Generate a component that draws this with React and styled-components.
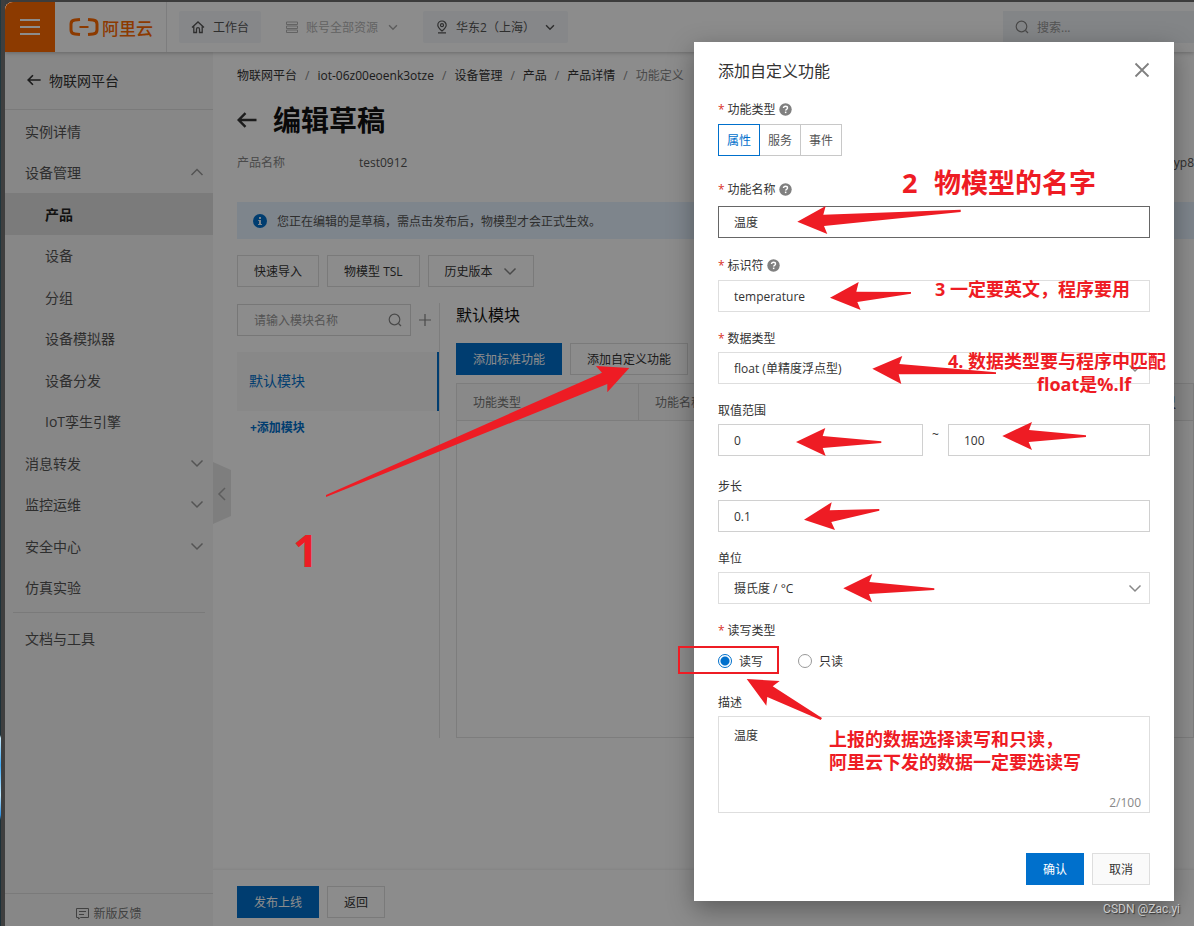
import React from "react";
import styled, { createGlobalStyle, css } from "styled-components";

const FONT = '"Open Sans", "Noto Sans CJK SC", sans-serif';
const BLUE = "#0070cc";
const RED = "#ee1c24";

const GlobalStyle = createGlobalStyle`
  *, *::before, *::after { box-sizing: border-box; }
  body { margin: 0; background: #3c3c3c; font-family: ${FONT}; font-size: 12px; color: #333; }
  button, input, select, textarea { font-family: inherit; font-size: inherit; color: inherit; }
  button { cursor: pointer; }
  h1, h2, p, ul { margin: 0; padding: 0; }
  ul { list-style: none; }
  a { color: inherit; text-decoration: none; }
`;

/* ---------- window ---------- */
const Window = styled.div`
  position: relative;
  display: flex;
  min-height: 100vh;
  padding-top: 2px;
  overflow: hidden;
`;

const DesktopEdge = styled.div`
  flex: 0 0 5px;
  margin-top: -2px;
  border-right: 4px solid #3f3f3f;
  background: linear-gradient(
    #22383f 0, #1c3038 735px, #c8e8f8 738px, #3fa9f5 765px, #bfe6fb 795px, #2f8fe0 815px, #1c3038 820px
  );
`;

const Console = styled.div`
  position: relative;
  flex: 1;
  min-width: 0;
  display: flex;
  flex-direction: column;
  background: #fff;
  border-top-left-radius: 8px;
  overflow: hidden;
`;

const Backdrop = styled.div`
  position: absolute;
  inset: 0;
  background: rgba(0, 0, 0, 0.45);
  z-index: 3;
`;

/* ---------- header ---------- */
const Header = styled.header`
  position: relative;
  z-index: 2;
  display: flex;
  align-items: center;
  height: 50px;
  background: #fff;
  box-shadow: 0 1px 4px rgba(0, 0, 0, 0.25);
`;

const MenuButton = styled.button`
  display: flex;
  align-items: center;
  justify-content: center;
  width: 50px;
  height: 50px;
  border: 0;
  padding: 0;
  background: #ff6a00;
`;

const Brand = styled.a`
  display: flex;
  align-items: center;
  gap: 3px;
  width: 112px;
  height: 50px;
  padding-left: 14px;
  border-right: 1px solid #e3e4e6;
  color: #ff6a00;
  font-size: 17px;
  font-weight: 500;
  white-space: nowrap;
`;

const HeaderButton = styled.button`
  display: flex;
  align-items: center;
  gap: 8px;
  height: 32px;
  margin-left: 12px;
  padding: 0 ${(p) => (p.$menu ? 13 : 12)}px;
  border: 0;
  border-radius: 2px;
  background: ${(p) => (p.disabled ? "transparent" : "#f4f6fa")};
  color: ${(p) => (p.disabled ? "#b5b5b5" : "#555")};
  white-space: nowrap;
  svg + svg, span + svg { margin-left: 2px; }
`;

const HeaderSearch = styled.label`
  display: flex;
  align-items: center;
  gap: 8px;
  width: 191px;
  height: 32px;
  margin-left: auto;
  padding-left: 12px;
  background: #eff2f6;
  color: #888;
  input {
    flex: 1;
    min-width: 0;
    border: 0;
    padding: 0;
    background: transparent;
    outline: 0;
  }
  input::placeholder { color: #999; }
`;

/* ---------- sidebar ---------- */
const Body = styled.div`
  flex: 1;
  display: flex;
  min-height: 0;
`;

const Sidebar = styled.aside`
  position: relative;
  display: flex;
  flex-direction: column;
  flex: 0 0 208px;
  background: #f6f6f6;
  font-size: 14px;
`;

const SideTitle = styled.a`
  display: flex;
  align-items: center;
  gap: 8px;
  height: 58px;
  padding: 0 0 2px 22px;
  border-bottom: 1px solid #dedede;
  color: #333;
`;

const Menu = styled.ul`
  display: flex;
  flex-direction: column;
  height: 498px;
`;

const MenuItem = styled.li`
  flex: 1;
  display: flex;
  align-items: center;
  padding: 0 9px 0 ${(p) => (p.$nested ? 40 : 20)}px;
  background: ${(p) => (p.$active ? "#e1e1e1" : "transparent")};
  color: ${(p) => (p.$active ? "#222" : "#555")};
  font-weight: ${(p) => (p.$active ? 700 : 400)};
  a { flex: 1; }
`;

const SideDivider = styled.hr`
  width: 192px;
  margin: 4px auto 5px;
  border: 0;
  border-top: 1px solid #dedede;
`;

const DocLink = styled.a`
  padding-left: 20px;
  line-height: 41px;
  color: #555;
`;

const Feedback = styled.a`
  display: flex;
  justify-content: center;
  gap: 4px;
  height: 33px;
  margin-top: auto;
  padding-top: 10px;
  border-top: 1px solid #dedede;
  font-size: 12px;
  line-height: 20px;
  color: #777;
  svg { margin-top: 3px; }
`;

const CollapseButton = styled.button`
  position: absolute;
  left: 208px;
  top: 410px;
  width: 18px;
  height: 62px;
  padding: 0;
  border: 0;
  background: none;
  svg { display: block; }
`;

/* ---------- main ---------- */
const Main = styled.main`
  flex: 1;
  min-width: 0;
  display: flex;
  flex-direction: column;
`;

const Content = styled.div`
  flex: 1;
  padding: 14px 0 0 24px;
`;

const Breadcrumb = styled.nav`
  display: flex;
  gap: 8px;
  line-height: 20px;
  white-space: nowrap;
  span { color: #888; }
`;

const PageTitle = styled.div`
  display: flex;
  align-items: center;
  gap: 16px;
  height: 40px;
  margin-top: 14px;
  h1 { font-size: 28px; font-weight: 700; line-height: 40px; color: #111; }
`;

const InfoRow = styled.dl`
  display: flex;
  margin: 13px 0 0;
  line-height: 20px;
  dt { width: 122px; color: #888; }
  dd { margin: 0; color: #555; }
  dd:last-child { margin-left: auto; width: 27px; overflow: hidden; }
`;

const Notice = styled.p`
  display: flex;
  align-items: center;
  gap: 10px;
  height: 37px;
  margin-top: 29px;
  padding-left: 16px;
  background: #e5f2ff;
  color: #555;
`;

const ButtonRow = styled.div`
  display: flex;
  gap: 8px;
  margin-top: ${(p) => p.$top || 0}px;
  justify-content: ${(p) => (p.$end ? "flex-end" : "flex-start")};
`;

const Button = styled.button`
  display: flex;
  align-items: center;
  gap: 10px;
  height: 32px;
  padding: 0 16px;
  border: 1px solid ${(p) => (p.$primary ? BLUE : "#dedede")};
  background: ${(p) => (p.$primary ? BLUE : p.$soft ? "#fafafa" : "#fff")};
  color: ${(p) => (p.$primary ? "#fff" : "#333")};
  white-space: nowrap;
`;

const Panels = styled.div`
  display: flex;
  height: 435px;
  margin-top: 16px;
`;

const ModuleColumn = styled.div`
  flex: 0 0 203px;
  padding-top: 1px;
  border-right: 1px solid #e3e3e3;
`;

const ModuleSearch = styled.div`
  display: flex;
  align-items: center;
  gap: 8px;
  label {
    display: flex;
    align-items: center;
    width: 174px;
    height: 32px;
    padding: 0 8px 0 16px;
    border: 1px solid #d9d9d9;
    color: #888;
  }
  input {
    flex: 1;
    min-width: 0;
    padding: 0;
    border: 0;
    background: transparent;
    outline: 0;
  }
  input::placeholder { color: #999; }
  button { display: flex; padding: 0; border: 0; background: none; }
`;

const ModuleItem = styled.a`
  display: block;
  height: 59px;
  margin-top: 16px;
  padding-left: 12px;
  border-right: 2px solid ${BLUE};
  background: #f7f7f7;
  font-size: 14px;
  line-height: 58px;
  color: ${BLUE};
`;

const AddModule = styled.a`
  display: block;
  margin-top: 7px;
  padding-left: 13px;
  line-height: 20px;
  font-weight: 700;
  color: ${BLUE};
`;

const FeatureColumn = styled.section`
  flex: 1;
  min-width: 0;
  padding-left: 16px;
  h2 { font-size: 16px; font-weight: 400; line-height: 24px; color: #111; }
`;

const FeatureTable = styled.table`
  width: 100%;
  height: 355px;
  margin-top: 8px;
  table-layout: fixed;
  border-collapse: collapse;
  border: 1px solid #e3e3e3;
  th {
    height: 37px;
    padding: 0 0 0 16px;
    border-bottom: 1px solid #e3e3e3;
    background: #fafafa;
    font-weight: 400;
    text-align: left;
    white-space: nowrap;
    color: #777;
  }
  th:first-child { border-right: 1px solid #e3e3e3; }
  th a { color: #4a5a8a; text-decoration: underline; }
`;

const ActionBar = styled.footer`
  padding: 16px 24px 8px;
  border-top: 1px solid #f5f5f5;
  box-shadow: 0 -1px 2px rgba(0, 0, 0, 0.03);
`;

/* ---------- dialog ---------- */
const Dialog = styled.section`
  position: absolute;
  z-index: 4;
  top: 42px;
  right: 20px;
  width: 480px;
  padding: 16px 24px 16px;
  background: #fff;
  box-shadow: 0 8px 24px rgba(0, 0, 0, 0.35);
`;

const DialogHead = styled.header`
  display: flex;
  align-items: center;
  justify-content: space-between;
  height: 24px;
  margin-bottom: 12px;
  h2 { font-size: 16px; font-weight: 400; color: #333; }
  button { display: flex; padding: 0; border: 0; background: none; }
`;

const Field = styled.div`
  margin-bottom: ${(p) => p.$gap || 12}px;
`;

const Label = styled.label`
  display: flex;
  align-items: center;
  gap: 3px;
  height: ${(p) => p.$height || 28}px;
  color: #333;
  i { color: #d93026; font-style: normal; }
`;

const control = css`
  display: block;
  width: 100%;
  height: 32px;
  padding: 0 15px;
  border: 1px solid #dedede;
  border-radius: 0;
  background: #fff;
  color: #333;
  outline: 0;
`;

const TextInput = styled.input`
  ${control}
  border-color: ${(p) => (p.$focused ? "#666" : p.$strong ? "#d0d0d0" : "#dedede")};
`;

const SelectBox = styled.div`
  position: relative;
  select { ${control} appearance: none; }
  svg { position: absolute; right: 8px; top: 9px; pointer-events: none; }
`;

const Segments = styled.div`
  display: flex;
`;

const Segment = styled.button`
  position: relative;
  z-index: ${(p) => (p.$active ? 1 : 0)};
  width: 42px;
  height: 32px;
  padding: 0;
  border: 1px solid ${(p) => (p.$active ? BLUE : "#c8c8c8")};
  background: #fff;
  color: ${(p) => (p.$active ? BLUE : "#555")};
  & + & { margin-left: -1px; }
`;

const RangeRow = styled.div`
  display: flex;
  span { flex: 0 0 25px; text-align: center; line-height: 22px; }
  input:first-child { flex: 1; min-width: 0; }
  input:last-child { flex: 0 0 202px; width: 202px; }
`;

const RadioRow = styled.div`
  display: flex;
  gap: 35px;
  height: 33px;
  label { display: flex; align-items: center; gap: 7px; }
  input {
    appearance: none;
    width: 14px;
    height: 14px;
    margin: 0;
    border: 1px solid #999;
    border-radius: 50%;
    background: #fff;
  }
  input:checked {
    border-color: ${BLUE};
    background: radial-gradient(circle, ${BLUE} 0 4px, #fff 5px);
  }
`;

const TextAreaBox = styled.div`
  display: flex;
  flex-direction: column;
  height: 97px;
  border: 1px solid #dedede;
  textarea {
    flex: 1;
    padding: 9px 15px 0;
    border: 0;
    background: transparent;
    resize: none;
    outline: 0;
    line-height: 20px;
    color: #333;
  }
  span { padding-right: 8px; line-height: 18px; text-align: right; color: #888; }
`;

/* ---------- annotations ---------- */
const Arrows = styled.svg`
  position: absolute;
  left: 0;
  top: 0;
  z-index: 5;
  overflow: visible;
  pointer-events: none;
  fill: ${RED};
`;

const Note = styled.p`
  position: absolute;
  z-index: 5;
  left: ${(p) => p.$x}px;
  top: ${(p) => p.$y}px;
  color: ${RED};
  font-size: ${(p) => p.$size || 18}px;
  font-weight: 700;
  line-height: ${(p) => p.$line || 23}px;
  white-space: pre;
  pointer-events: none;
`;

const Frame = styled.div`
  position: absolute;
  left: -16px;
  top: 604px;
  width: 101px;
  height: 28px;
  border: 2px solid ${RED};
  pointer-events: none;
`;

const Watermark = styled.p`
  position: absolute;
  z-index: 5;
  right: 14px;
  bottom: 8px;
  font-family: Roboto, sans-serif;
  font-size: 12px;
  line-height: 18px;
  color: #ccc;
  text-shadow: 1px 1px 1px #333;
`;

/* ---------- icons ---------- */
const Line = ({ w = 14, h = w, box = `0 0 ${w} ${h}`, color = "currentColor", sw = 1, children }) => (
  <svg width={w} height={h} viewBox={box} fill="none" stroke={color} strokeWidth={sw} aria-hidden="true">
    {children}
  </svg>
);
const Chevron = ({ up, size = 14, color = "#888", sw = 1.5 }) => (
  <Line w={size} box="0 0 14 14" color={color} sw={sw}>
    <path d={up ? "M1.5 10 7 4.5l5.500 5.500" : "M1.500 4.500 7 10l5.500-5.500"} />
  </Line>
);
const BackArrow = ({ w, h }) => (
  <Line w={w} h={h} box="0 0 20 16" color="#333" sw={2.4}>
    <path d="M19.500 8H2M8.500 1.200 1.700 8l6.800 6.800" />
  </Line>
);
const SearchIcon = () => (
  <Line w={14} color="#888" sw={1.2}>
    <circle cx="6.500" cy="6.500" r="5.300" />
    <path d="m10.500 10.500 2.500 2.500" />
  </Line>
);
const Help = () => (
  <svg width="13" height="13" viewBox="0 0 13 13" aria-hidden="true">
    <circle cx="6.500" cy="6.500" r="6.200" fill="#808080" />
    <path d="M4.500 5.100c0-1.200.9-1.900 2-1.900s2 .7 2 1.700c0 1.400-1.900 1.400-1.900 2.700" fill="none" stroke="#fff" strokeWidth="1.400" />
    <rect x="5.900" y="8.600" width="1.500" height="1.500" fill="#fff" />
  </svg>
);
const Info = () => (
  <svg width="14" height="14" viewBox="0 0 14 14" aria-hidden="true">
    <circle cx="7" cy="7" r="7" fill={BLUE} />
    <path d="M6 3h2v2H6zM5.200 6H8v4h1v1H5v-1h1V7h-.8z" fill="#e5f2ff" />
  </svg>
);

const MENU = [
  { text: "实例详情" },
  { text: "设备管理", arrow: "up" },
  { text: "产品", nested: true, active: true },
  { text: "设备", nested: true },
  { text: "分组", nested: true },
  { text: "设备模拟器", nested: true },
  { text: "设备分发", nested: true },
  { text: "IoT孪生引擎", nested: true },
  { text: "消息转发", arrow: "down" },
  { text: "监控运维", arrow: "down" },
  { text: "安全中心", arrow: "down" },
  { text: "仿真实验" },
];

const CRUMBS = ["物联网平台", "iot-06z00eoenk3otze", "设备管理", "产品", "产品详情"];

function FieldLabel({ htmlFor, required, help, height, children }) {
  return (
    <Label htmlFor={htmlFor} as={htmlFor ? "label" : "div"} $height={height}>
      {required && <i>*</i>}
      <span>{children}</span>
      {help && <Help />}
    </Label>
  );
}

function TopBar() {
  return (
    <Header>
      <MenuButton aria-label="菜单">
        <Line w={20} h={16} color="#fff" sw={2}>
          <path d="M0 1h20M0 8h20M0 15h20" />
        </Line>
      </MenuButton>
      <Brand href="#">
        <svg width="30" height="20" viewBox="0 0 30 20" fill="none" stroke="#ff6a00" aria-hidden="true">
          <path d="M11 2.500 6 2.900Q2 3.200 2 7v6q0 3.800 4 4.100l5 .4M19 2.500l5 .4q4 .3 4 4.100v6q0 3.800-4 4.100l-5 .4" strokeWidth="3" />
          <path d="M10.500 10h9" strokeWidth="2" />
        </svg>
        阿里云
      </Brand>
      <HeaderButton>
        <Line w={14} color="#555" sw={1.3}>
          <path d="M1 7.500 7 2l6 5.500M2.800 6.500v6h2.700V9q0-1.300 1.500-1.300T8.500 9v3.500h2.700v-6" />
        </Line>
        <span>工作台</span>
      </HeaderButton>
      <HeaderButton $menu disabled>
        <Line w={12} color="#b5b5b5" sw={1}>
          <path d="M.5 1h11v2.500H.5zM.5 5h11v2.500H.5zM.5 9h11v2.500H.5z" />
        </Line>
        <span>账号全部资源</span>
        <Chevron size={10} color="#aaa" sw={2} />
      </HeaderButton>
      <HeaderButton $menu>
        <Line w={12} h={14} box="1 0 12 14" color="#555" sw={1.2}>
          <path d="M7 11C4 8.500 2.800 7 2.800 5.200a4.200 4.200 0 0 1 8.400 0C11.200 7 10 8.500 7 11zM3 12.800h8" />
          <circle cx="7" cy="5.200" r="1.500" />
        </Line>
        <span>华东2（上海）</span>
        <Chevron size={10} color="#555" sw={2} />
      </HeaderButton>
      <HeaderSearch>
        <SearchIcon />
        <input type="search" placeholder="搜索..." aria-label="搜索" />
      </HeaderSearch>
    </Header>
  );
}

function SideNav() {
  return (
    <Sidebar>
      <SideTitle href="#">
        <BackArrow w={14} h={12} />
        物联网平台
      </SideTitle>
      <Menu>
        {MENU.map((m) => (
          <MenuItem key={m.text} $nested={m.nested} $active={m.active}>
            <a href="#">{m.text}</a>
            {m.arrow && <Chevron up={m.arrow === "up"} color="#999" />}
          </MenuItem>
        ))}
      </Menu>
      <SideDivider />
      <DocLink href="#">文档与工具</DocLink>
      <Feedback href="#">
        <Line w={13} color="#777">
          <path d="M.5 1.500h12v9H4.500l-2 1.500v-1.500h-2zM3 4.500h7M3 7.500h5" />
        </Line>
        新版反馈
      </Feedback>
      <CollapseButton aria-label="收起">
        <svg width="18" height="62" viewBox="0 0 18 62">
          <path d="M0 0 18 8v46L0 62z" fill="#e6e6e6" />
          <path d="m12 26-6 6 6 6" fill="none" stroke="#aaa" strokeWidth="1.500" />
        </svg>
      </CollapseButton>
    </Sidebar>
  );
}

function ProductPage() {
  return (
    <Main>
      <Content>
        <Breadcrumb aria-label="位置">
          {CRUMBS.map((c) => (
            <React.Fragment key={c}>
              <a href="#">{c}</a>
              <span>/</span>
            </React.Fragment>
          ))}
          <span>功能定义</span>
        </Breadcrumb>
        <PageTitle>
          <BackArrow w={20} h={16} />
          <h1>编辑草稿</h1>
        </PageTitle>
        <InfoRow>
          <dt>产品名称</dt>
          <dd>test0912</dd>
          <dd>5yp8</dd>
        </InfoRow>
        <Notice>
          <Info />
          您正在编辑的是草稿，需点击发布后，物模型才会正式生效。
        </Notice>
        <ButtonRow $top={16}>
          <Button>快速导入</Button>
          <Button>物模型 TSL</Button>
          <Button>
            历史版本
            <Chevron />
          </Button>
        </ButtonRow>
        <Panels>
          <ModuleColumn>
            <ModuleSearch>
              <label>
                <input placeholder="请输入模块名称" aria-label="请输入模块名称" />
                <SearchIcon />
              </label>
              <button aria-label="添加">
                <Line w={12} color="#888" sw={1.2}>
                  <path d="M6 0v12M0 6h12" />
                </Line>
              </button>
            </ModuleSearch>
            <ModuleItem href="#">默认模块</ModuleItem>
            <AddModule href="#">+添加模块</AddModule>
          </ModuleColumn>
          <FeatureColumn>
            <h2>默认模块</h2>
            <ButtonRow $top={16}>
              <Button $primary>添加标准功能</Button>
              <Button>添加自定义功能</Button>
            </ButtonRow>
            <FeatureTable>
              <colgroup>
                <col width="182" />
                <col />
                <col />
                <col width="82" />
              </colgroup>
              <thead>
                <tr>
                  <th>功能类型</th>
                  <th>功能名称</th>
                  <th>标识符</th>
                  <th><a href="#">数据类型</a></th>
                </tr>
              </thead>
              <tbody>
                <tr>
                  <td colSpan={4} />
                </tr>
              </tbody>
            </FeatureTable>
          </FeatureColumn>
        </Panels>
      </Content>
      <ActionBar>
        <ButtonRow>
          <Button $primary>发布上线</Button>
          <Button>返回</Button>
        </ButtonRow>
      </ActionBar>
    </Main>
  );
}

/* Arrow outlines share the dialog's 480 x 859 area; each ends at the control it explains. */
const DIALOG_ARROWS = [
  "960.700,209.700 960.700,212 824,226 827.300,234 797.300,221.700 825.700,206 823.300,214.700",
  "911,292 911,293.700 857.300,302 860.700,310 830,297.700 858.700,282 856.300,291.700",
  "996,372.300 996,374 898.700,374.300 901.300,384 872.300,368.700 902.300,356 899.300,364",
  "881.300,441.300 881.300,443 822.700,448 825.700,456 796,442 825.300,428 822.700,436",
  "1086,435.300 1086,437 1028.700,442 1032,450 1002.300,436 1032,422 1029,430",
  "879.300,509 879.300,510.700 831.300,522 835,530 804,519.700 831.700,502.300 829.700,510.300",
  "934.300,588.300 934.300,590 869,594 872,602.300 843.300,588.300 872.300,574 869.300,582",
  "822,718 820.700,720 767.300,697 766.300,705.700 746.700,679 779.700,681 772.700,686.300",
];

function FeatureDialog() {
  return (
    <Dialog role="dialog" aria-labelledby="dialog-title">
      <DialogHead>
        <h2 id="dialog-title">添加自定义功能</h2>
        <button aria-label="关闭">
          <Line w={16} color="#808080" sw={1.8}>
            <path d="m1.500 1.500 13 13m0-13-13 13" />
          </Line>
        </button>
      </DialogHead>
      <Field $gap={16}>
        <FieldLabel required help height={30}>功能类型</FieldLabel>
        <Segments>
          <Segment $active aria-pressed="true">属性</Segment>
          <Segment aria-pressed="false">服务</Segment>
          <Segment aria-pressed="false">事件</Segment>
        </Segments>
      </Field>
      <Field>
        <FieldLabel htmlFor="name" required help height={34}>功能名称</FieldLabel>
        <TextInput id="name" $focused defaultValue="温度" />
      </Field>
      <Field>
        <FieldLabel htmlFor="ident" required help height={30}>标识符</FieldLabel>
        <TextInput id="ident" defaultValue="temperature" />
      </Field>
      <Field>
        <FieldLabel htmlFor="type" required>数据类型</FieldLabel>
        <SelectBox>
          <select id="type">
            <option>float (单精度浮点型)</option>
          </select>
          <Chevron />
        </SelectBox>
      </Field>
      <Field $gap={16}>
        <FieldLabel htmlFor="min">取值范围</FieldLabel>
        <RangeRow>
          <TextInput id="min" $strong defaultValue="0" />
          <span>~</span>
          <TextInput aria-label="最大值" $strong defaultValue="100" />
        </RangeRow>
      </Field>
      <Field>
        <FieldLabel htmlFor="step">步长</FieldLabel>
        <TextInput id="step" $strong defaultValue="0.1" />
      </Field>
      <Field>
        <FieldLabel htmlFor="unit">单位</FieldLabel>
        <SelectBox>
          <select id="unit">
            <option>摄氏度 / °C</option>
          </select>
          <Chevron />
        </SelectBox>
      </Field>
      <Field $gap={11}>
        <FieldLabel required>读写类型</FieldLabel>
        <RadioRow>
          <label>
            <input type="radio" name="access" defaultChecked />
            读写
          </label>
          <label>
            <input type="radio" name="access" />
            只读
          </label>
        </RadioRow>
      </Field>
      <Field $gap={40}>
        <FieldLabel htmlFor="desc">描述</FieldLabel>
        <TextAreaBox>
          <textarea id="desc" defaultValue="温度" />
          <span>2/100</span>
        </TextAreaBox>
      </Field>
      <ButtonRow $end>
        <Button $primary>确认</Button>
        <Button $soft>取消</Button>
      </ButtonRow>

      <Frame />
      <Arrows width="480" height="859" viewBox="694 42 480 859">
        {DIALOG_ARROWS.map((points) => (
          <polygon key={points} points={points} />
        ))}
      </Arrows>
      <Note $x={208} $y={121} $size={27} $line={40}>2</Note>
      <Note $x={240} $y={121} $size={27} $line={40}>物模型的名字</Note>
      <Note $x={241} $y={236}>3 一定要英文，程序要用</Note>
      <Note $x={254} $y={308}>4. 数据类型要与程序中匹配</Note>
      <Note $x={343} $y={331}>float是%.lf</Note>
      <Note $x={135} $y={686}>{"上报的数据选择读写和只读，\n阿里云下发的数据一定要选读写"}</Note>
    </Dialog>
  );
}

export default function App() {
  return (
    <Window>
      <GlobalStyle />
      <DesktopEdge />
      <Console>
        <TopBar />
        <Body>
          <SideNav />
          <ProductPage />
        </Body>
        <Backdrop />
      </Console>
      <FeatureDialog />
      <Arrows width="640" height="500" viewBox="0 0 640 500">
        <polygon points="326,495 326,497 607.300,384 607.300,392.300 629.300,368 596,366 602,372.700" />
      </Arrows>
      <Note $x={293} $y={520} $size={44} $line={60}>1</Note>
      <Watermark>CSDN @Zac.yi</Watermark>
    </Window>
  );
}
